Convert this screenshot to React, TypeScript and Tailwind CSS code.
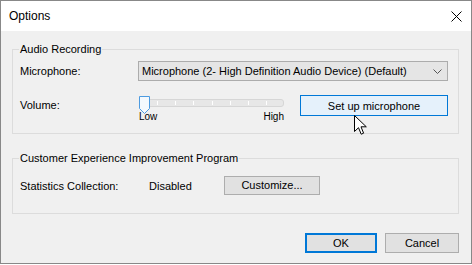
const font = { fontFamily: '"Liberation Sans", Arial, sans-serif' };

function Slider() {
  const ticks = [157, 175, 193, 212, 230, 248, 266];
  return (
    <div className="relative w-[146px] h-[31px]">
      {/* track */}
      <div className="relative mt-[4px] ml-[2px] w-[144px] h-[8px] rounded-[3px] border border-[#d6d6d6] bg-[#e7e7e7]">
        {ticks.map((t) => (
          <div key={t} className="absolute top-[1px] w-px h-[4px] bg-white" style={{ left: t - 141 }} />
        ))}
      </div>
      {/* thumb */}
      <svg className="absolute left-[1px] top-[1px]" width="11" height="18" viewBox="0 0 11 18">
        <path d="M0.5 0.5H10.5V12.5L5.5 17.5L0.5 12.5Z" fill="#f4f9fd" stroke="#4d9be0" />
      </svg>
      <div className="mt-[3px] ml-[1px] w-[145px] flex justify-between text-[10px] leading-[13px] text-black">
        <span>Low</span>
        <span>High</span>
      </div>
    </div>
  );
}

export default function App() {
  return (
    <div className="w-[472px] h-[265px] bg-white text-[11px] text-black" style={font}>
      <div className="h-[264px] border border-[#888888] flex flex-col">
        {/* title bar */}
        <div className="h-[30px] bg-white flex items-center justify-between pl-[8px] pr-[9px]">
          <span className="text-[12px] leading-[16px]">Options</span>
          <svg width="11" height="11" viewBox="0 0 11 11" className="mt-[1px]">
            <path d="M0.5 0.5L10.5 10.5M10.5 0.5L0.5 10.5" stroke="#000" strokeWidth="1" />
          </svg>
        </div>

        {/* content */}
        <div className="flex-1 bg-[#f0f0f0] pl-[11px] pr-[12px] pt-[10px]">
          <fieldset className="border border-[#dcdcdc] pl-[7px] pr-[10px] pb-[7px]">
            <legend className="-ml-[1px] px-[1px] leading-[16px]">Audio Recording</legend>
            <div className="mt-[4px] h-[20px] flex items-center">
              <span className="w-[118px]">Microphone:</span>
              <div className="flex-1 h-[20px] border border-[#acacac] bg-[#e5e5e5] flex items-center justify-between pl-[3px] pr-[5px]">
                <span className="leading-[16px]">Microphone (2- High Definition Audio Device) (Default)</span>
                <svg width="9" height="5" viewBox="0 0 9 5">
                  <path d="M0.5 0.5L4.5 4.5L8.5 0.5" fill="none" stroke="#555" strokeWidth="1" />
                </svg>
              </div>
            </div>
            <div className="mt-[14px] flex items-start">
              <span className="w-[118px] leading-[21px]">Volume:</span>
              <Slider />
              <div className="relative ml-auto">
                <button className="w-[148px] h-[21px] border border-[#0078d7] bg-[#e5f1fb] leading-[16px]">
                  Set up microphone
                </button>
                {/* mouse pointer */}
                <svg className="absolute left-[54px] top-[20px]" width="14" height="21" viewBox="0 0 14 21">
                  <path
                    d="M0.5 0.5V16.5L4.5 12.7L7.2 19.2L9.6 18.2L7 11.8H12.3Z"
                    fill="#fff"
                    stroke="#000"
                    strokeLinejoin="miter"
                  />
                </svg>
              </div>
            </div>
          </fieldset>

          <fieldset className="mt-[16px] border border-[#dcdcdc] pl-[7px] pr-[10px] pb-[18px]">
            <legend className="-ml-[1px] px-[1px] leading-[16px]">Customer Experience Improvement Program</legend>
            <div className="mt-[10px] h-[19px] flex items-center">
              <span className="w-[129px] pt-[2px]">Statistics Collection:</span>
              <span className="w-[75px] pt-[2px]">Disabled</span>
              <button className="w-[96px] h-[19px] border border-[#adadad] bg-[#e1e1e1] leading-[15px]">
                Customize...
              </button>
            </div>
          </fieldset>

          <div className="mt-[19px] flex justify-end gap-[8px]">
            <button className="w-[72px] h-[20px] border-2 border-[#0078d7] bg-[#e1e1e1] leading-[15px]">OK</button>
            <button className="w-[74px] h-[20px] border border-[#adadad] bg-[#e1e1e1] leading-[16px]">Cancel</button>
          </div>
        </div>
      </div>
    </div>
  );
}
